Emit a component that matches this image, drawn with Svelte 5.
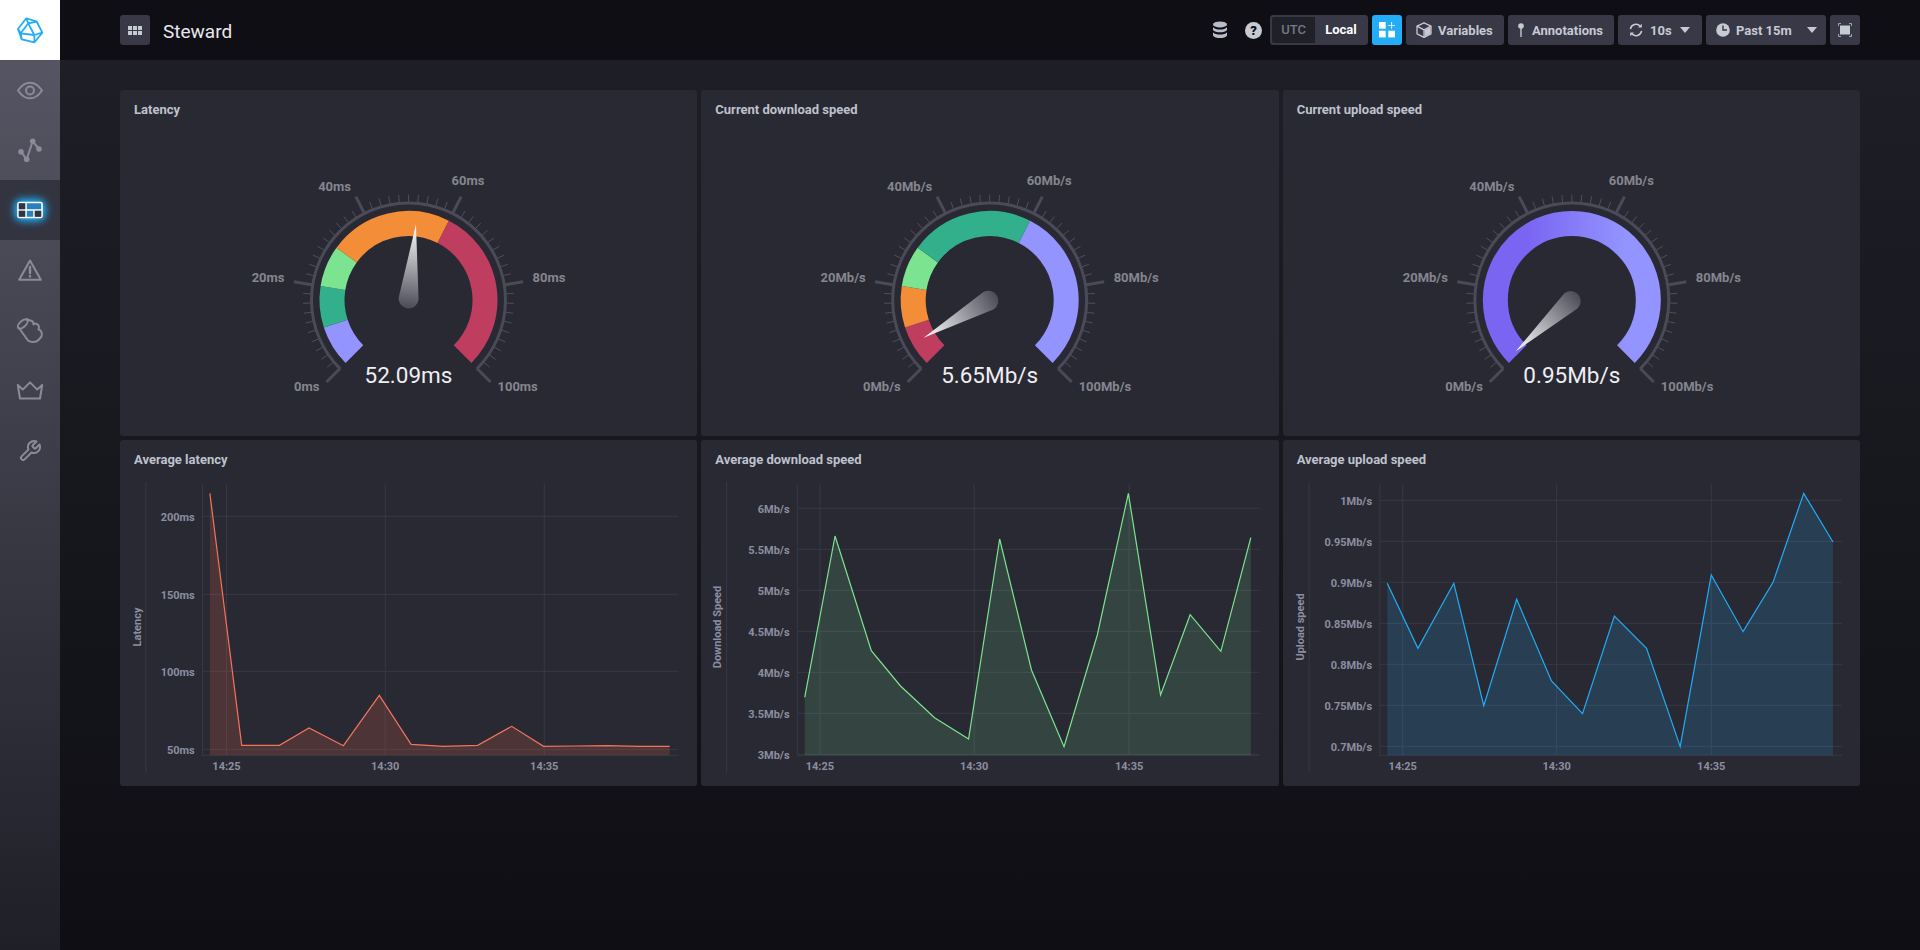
<script>
  const W = 577.33;
  const SX = 1568 / 580;
  const polar = (cx, cy, r, deg) => {
    const a = (deg * Math.PI) / 180;
    return [cx + r * Math.sin(a), cy - r * Math.cos(a)];
  };
  const angle = (pct) => -135 + 2.7 * pct;
  const arc = (cx, cy, r, from, to) => {
    const [x1, y1] = polar(cx, cy, r, angle(from));
    const [x2, y2] = polar(cx, cy, r, angle(to));
    const large = (to - from) * 2.7 > 180 ? 1 : 0;
    return `M${x1.toFixed(2)} ${y1.toFixed(2)}A${r} ${r} 0 ${large} 1 ${x2.toFixed(2)} ${y2.toFixed(2)}`;
  };
  const C = { lav: '#9394ff', teal: '#32b08c', lime: '#7ce490', org: '#f48d38', red: '#bf3d5e' };
  const bounds = [[0, 10], [10, 20], [20, 30], [30, 60], [60, 100]];

  const gauges = [
    { title: 'Latency', left: 120, cx: 408.5, unit: 'ms', pct: 52.09, text: '52.09ms',
      colors: [C.lav, C.teal, C.lime, C.org, C.red] },
    { title: 'Current download speed', left: 701.33, cx: 990, unit: 'Mb/s', pct: 5.65, text: '5.65Mb/s',
      colors: [C.red, C.org, C.lime, C.teal, C.lav] },
    { title: 'Current upload speed', left: 1282.67, cx: 1571.5, unit: 'Mb/s', pct: 0.95, text: '0.95Mb/s',
      colors: null }
  ];
  const labelPos = [
    { v: 0, dx: -89, y: 391.5, anchor: 'end' },
    { v: 20, dx: -124, y: 282.5, anchor: 'end' },
    { v: 40, dx: -57.5, y: 191.5, anchor: 'end' },
    { v: 60, dx: 59.5, y: 185.5, anchor: 'middle' },
    { v: 80, dx: 124, y: 282.5, anchor: 'start' },
    { v: 100, dx: 89, y: 391.5, anchor: 'start' }
  ];
  const ticks = Array.from({ length: 51 }, (_, i) => i);

  const zx = (o, x) => +(o + x / SX).toFixed(2);
  const zy = (y) => +(440 + y / 3).toFixed(2);

  const charts = [
    { title: 'Average latency', left: 120, origin: 120, axis: 70, plotL: 223, plotR: 1510, labelR: 202, yTitle: 'Latency', yTitleX: 45,
      line: '#f4745a', fill: '#f0674f', fillOp: 0.18,
      grid: [[229, '200ms'], [463, '150ms'], [694, '100ms'], [928, '50ms']], vert: [288, 717, 1147],
      pts: [[243,160],[329,916],[431,916],[511,864],[604,917],[701,766],[787,913],[875,919],[967,916],[1059,859],[1145,919],[1230,918],[1317,917],[1402,919],[1486,919]] },
    { title: 'Average download speed', left: 701.33, origin: 700, axis: 73, plotL: 264, plotR: 1513, labelR: 243, yTitle: 'Download Speed', yTitleX: 47,
      line: '#7ce490', fill: '#7ce490', fillOp: 0.15,
      grid: [[205, '6Mb/s'], [328, '5.5Mb/s'], [451, '5Mb/s'], [574, '4.5Mb/s'], [697, '4Mb/s'], [820, '3.5Mb/s'], [943, '3Mb/s']], vert: [325, 742, 1161],
      pts: [[284,772],[366,288],[464,632],[543,738],[635,833],[727,897],[811,297],[897,690],[985,920],[1075,585],[1159,160],[1246,765],[1326,524],[1409,634],[1490,293]] },
    { title: 'Average upload speed', left: 1282.67, origin: 1280, axis: 78, plotL: 269, plotR: 1519, labelR: 248, yTitle: 'Upload speed', yTitleX: 52,
      line: '#22adf6', fill: '#22adf6', fillOp: 0.17,
      grid: [[181, '1Mb/s'], [304, '0.95Mb/s'], [427, '0.9Mb/s'], [550, '0.85Mb/s'], [673, '0.8Mb/s'], [796, '0.75Mb/s'], [919, '0.7Mb/s']], vert: [331, 747, 1165],
      pts: [[289,430],[372,625],[469,430],[550,797],[639,478],[733,723],[817,821],[903,528],[990,625],[1081,920],[1165,405],[1251,575],[1332,427],[1415,160],[1494,306]] }
  ];
  const times = ['14:25', '14:30', '14:35'];
  const BOTTOM = 946;
  const linePts = (c) => c.pts.map(([x, y]) => `${zx(c.origin, x)},${zy(y)}`).join(' ');
  const areaPts = (c) =>
    `${zx(c.origin, c.pts[0][0])},${zy(BOTTOM)} ${linePts(c)} ${zx(c.origin, c.pts[c.pts.length - 1][0])},${zy(BOTTOM)}`;
</script>

<div class="app">
  <nav class="side">
    <div class="logo">
      <svg width="60" height="60" viewBox="0 0 60 60" fill="none" stroke="#22adf6" stroke-width="1.8" stroke-linejoin="round">
        <path d="M26.3 18.3 36.7 21.5 42.3 32.7 34.5 42.3 21.7 39.3 18 29Z" />
        <path d="M26.3 18.3 28.3 23.3 36.7 21.5M28.3 23.3 34.3 35 42.3 32.7M34.3 35 34.5 42.3M28.3 23.3 20.7 33.3 34.3 35M18 29 20.7 33.3 21.7 39.3" />
      </svg>
    </div>
    <div class="item">
      <svg class="ic" width="60" height="60" viewBox="0 0 60 60">
        <path d="M18 30.5C22 24.5 26 22.7 30 22.7S38 24.5 42 30.5C38 36.5 34 38.3 30 38.3S22 36.5 18 30.5Z" />
        <circle cx="30" cy="30.5" r="4" />
      </svg>
    </div>
    <div class="item">
      <svg class="ic" width="60" height="60" viewBox="0 0 60 60">
        <path d="M21 31.7 26.7 39.3 32.7 21.3 39 29" />
        <circle class="dot" cx="21" cy="31.7" r="2.8" />
        <circle class="dot" cx="26.7" cy="39.3" r="2.8" />
        <circle class="dot" cx="32.7" cy="21.3" r="2.8" />
        <circle class="dot" cx="39" cy="29" r="2.8" />
      </svg>
    </div>
    <div class="item active">
      <svg class="glow" width="60" height="60" viewBox="0 0 60 60">
        <rect x="18" y="22.5" width="24" height="15" rx="1.5" fill="#2a7fbd" stroke="#fff" stroke-width="1.6" />
        <path d="M26 22.5V37.5M18 30H42M34 30V37.5" stroke="#fff" stroke-width="1.6" fill="none" />
        <rect x="18.8" y="23.3" width="6.4" height="5.9" fill="#33343f" />
        <rect x="18.8" y="30.8" width="6.4" height="5.9" fill="#33343f" />
        <rect x="34.8" y="30.8" width="6.4" height="5.9" fill="#33343f" />
      </svg>
    </div>
    <div class="item">
      <svg class="ic" width="60" height="60" viewBox="0 0 60 60">
        <path d="M30 20.5 40.8 39.8H19.2Z" />
        <path class="thick" d="M30 27V33M30 36V36.6" />
      </svg>
    </div>
    <div class="item">
      <svg class="ic" width="60" height="60" viewBox="0 0 60 60">
        <path d="M19 28 28 40.5C30.5 42.5 36 42.8 38.5 40L41.5 36.5C42.5 33.5 41.5 30 38.5 29.5 39.8 27 38.5 23.5 35 23.5L33.5 24.5C33.8 22 32 20.5 30 20.5L26.5 19" />
        <ellipse cx="22.7" cy="24" rx="6" ry="3" transform="rotate(-42 22.7 24)" />
      </svg>
    </div>
    <div class="item">
      <svg class="ic" width="60" height="60" viewBox="0 0 60 60">
        <path d="M17.8 25 22.8 29.6 30 22.4 37.2 29.6 42.2 25 40 38.5H20Z" />
      </svg>
    </div>
    <div class="item">
      <svg class="ic" width="60" height="60" viewBox="0 0 60 60">
        <g transform="translate(18 19)">
          <path d="M14.7 6.3a1 1 0 0 0 0 1.4l1.6 1.6a1 1 0 0 0 1.4 0l3.77-3.77a6 6 0 0 1-7.94 7.94l-6.91 6.91a2.12 2.12 0 0 1-3-3l6.91-6.91a6 6 0 0 1 7.94-7.94l-3.76 3.76z" />
        </g>
      </svg>
    </div>
  </nav>

  <div class="main">
    <header class="top">
      <button class="btn square first" aria-label="Dashboards">
        <svg width="14" height="9" viewBox="0 0 14 9" fill="#c6cad3">
          <rect width="4" height="4" /><rect x="5" width="4" height="4" /><rect x="10" width="4" height="4" />
          <rect y="5" width="4" height="4" /><rect x="5" y="5" width="4" height="4" /><rect x="10" y="5" width="4" height="4" />
        </svg>
      </button>
      <h1>Steward</h1>
      <div class="tools">
        <svg class="db" width="16" height="18" viewBox="0 0 16 18" fill="#b8bcc8">
          <ellipse cx="8" cy="3.4" rx="7" ry="3" />
          <path d="M1 6.2C2.5 8 5 8.5 8 8.5S13.5 8 15 6.2V9C14 10.6 11 11.3 8 11.3S2 10.6 1 9Z" />
          <path d="M1 11.2C2.5 13 5 13.6 8 13.6S13.5 13 15 11.2V14.4C14 16.2 11 17 8 17S2 16.2 1 14.4Z" />
        </svg>
        <span class="help">?</span>
        <div class="toggle"><span class="utc">UTC</span><span class="local">Local</span></div>
        <button class="btn square blue" aria-label="Add cell">
          <svg width="16" height="16" viewBox="0 0 16 16" fill="#fff">
            <rect x="0" y="0" width="6.7" height="6.7" /><rect x="0" y="8.7" width="6.7" height="6.7" /><rect x="9.3" y="8.7" width="6.7" height="6.7" />
            <path d="M12.2 0h.9v2.9H16v.9h-2.9v2.9h-.9V3.8H9.3v-.9h2.9z" />
          </svg>
        </button>
        <button class="btn w-var">
          <svg width="16" height="16" viewBox="0 0 16 16" fill="none" stroke="#c6cad3" stroke-width="1.3" stroke-linejoin="round">
            <path d="M8 .8 15 4.2V11.8L8 15.4 1 11.8V4.2Z" />
            <path d="M1 4.2 8 7.8 15 4.2M8 7.8V15.4" />
            <path d="M8.6 8.2 14.5 5V11.5L8.6 14.6Z" fill="#c6cad3" stroke="none" />
          </svg>
          <span>Variables</span>
        </button>
        <button class="btn w-ann">
          <svg width="6" height="14" viewBox="0 0 6 14" fill="#c6cad3">
            <circle cx="3" cy="3" r="2.8" /><rect x="2.3" y="4" width="1.4" height="10" />
          </svg>
          <span>Annotations</span>
        </button>
        <button class="btn w-ref">
          <svg width="14" height="14" viewBox="0 0 14 14" fill="none" stroke="#c6cad3" stroke-width="1.5">
            <path d="M1.4 6.2A5.7 5.7 0 0 1 11.4 3.4M12.6 7.8A5.7 5.7 0 0 1 2.6 10.6" />
            <path d="M12.8.8V4.6H9ZM1.2 13.2V9.4H5Z" fill="#c6cad3" stroke="none" />
          </svg>
          <span class="t10">10s</span>
          <svg class="caret" width="10" height="6" viewBox="0 0 10 6"><path d="M0 0H10L5 6Z" fill="#c6cad3" /></svg>
        </button>
        <button class="btn w-time">
          <svg width="14" height="14" viewBox="0 0 14 14">
            <circle cx="7" cy="7" r="6.8" fill="#c6cad3" />
            <path d="M6.3 2.6H7.7V6.3H11V7.7H6.3Z" fill="#383846" />
          </svg>
          <span class="past">Past 15m</span>
          <svg class="caret" width="10" height="6" viewBox="0 0 10 6"><path d="M0 0H10L5 6Z" fill="#c6cad3" /></svg>
        </button>
        <button class="btn square" aria-label="Full screen">
          <svg width="14" height="14" viewBox="0 0 14 14">
            <rect x="2" y="2.5" width="10" height="9" fill="#c6cad3" />
            <path d="M.4 3V.6H3M11 .6H13.6V3M13.6 11V13.4H11M3 13.4H.4V11" fill="none" stroke="#c6cad3" stroke-width=".8" />
          </svg>
        </button>
      </div>
    </header>

    <section class="grid">
      {#each gauges as g, i}
        <article class="panel">
          <h2>{g.title}</h2>
          <svg class="plot" viewBox="{g.left} 128 {W} 308" width={W} height="308">
            <defs>
              <linearGradient id="needle{i}" gradientUnits="userSpaceOnUse" x1="0" y1="-76" x2="0" y2="10">
                <stop offset="0" stop-color="#ffffff" />
                <stop offset="1" stop-color="#484855" />
              </linearGradient>
              <linearGradient id="sweep{i}" gradientUnits="userSpaceOnUse" x1={g.cx - 89} y1="0" x2={g.cx + 89} y2="0">
                <stop offset="0.25" stop-color="#7a65f2" />
                <stop offset="0.8" stop-color="#9394ff" />
              </linearGradient>
            </defs>
            {#each ticks as t}
              {@const major = t % 10 === 0}
              {@const a = polar(g.cx, 300, 96.5, angle(t * 2))}
              {@const b = polar(g.cx, 300, major ? 116 : 105.5, angle(t * 2))}
              <line x1={a[0]} y1={a[1]} x2={b[0]} y2={b[1]} stroke={major ? '#4a4a58' : '#4f4f5c'} stroke-width={major ? 3 : 1} />
            {/each}
            <path d={arc(g.cx, 300, 97, 0, 100)} fill="none" stroke="#4a4a58" stroke-width="3" />
            {#if g.colors}
              {#each bounds as s, k}
                <path d={arc(g.cx, 300, 76.5, s[0], s[1])} fill="none" stroke={g.colors[k]} stroke-width="25" />
              {/each}
            {:else}
              <path d={arc(g.cx, 300, 76.5, 0, 100)} fill="none" stroke="url(#sweep{i})" stroke-width="25" />
            {/if}
            {#each labelPos as l}
              <text class="gl" x={g.cx + l.dx} y={l.y} text-anchor={l.anchor}>{l.v}{g.unit}</text>
            {/each}
            <g transform="translate({g.cx} 300) rotate({angle(g.pct)})">
              <path d="M0 -76 10 -1.5A10 10 0 1 1 -10 -1.5Z" fill="url(#needle{i})" />
            </g>
            <text class="gv" x={g.cx} y="383" text-anchor="middle">{g.text}</text>
          </svg>
        </article>
      {/each}

      {#each charts as c}
        <article class="panel">
          <h2>{c.title}</h2>
          <svg class="plot" viewBox="{c.left} 478 {W} 308" width={W} height="308">
            <line class="axis" x1={zx(c.origin, c.axis)} y1="481.7" x2={zx(c.origin, c.axis)} y2="772.7" />
            <line class="gridl" x1={zx(c.origin, c.plotL)} y1="484" x2={zx(c.origin, c.plotL)} y2={zy(BOTTOM)} />
            {#each c.vert as v}
              <line class="gridl" x1={zx(c.origin, v)} y1="484" x2={zx(c.origin, v)} y2={zy(BOTTOM)} />
            {/each}
            {#each c.grid as g}
              <line class="gridl" x1={zx(c.origin, c.plotL)} y1={zy(g[0])} x2={zx(c.origin, c.plotR)} y2={zy(g[0])} />
              <text class="tick" x={zx(c.origin, c.labelR)} y={zy(g[0]) + 4.5} text-anchor="end">{g[1]}</text>
            {/each}
            <line class="gridl" x1={zx(c.origin, c.plotL)} y1={zy(BOTTOM)} x2={zx(c.origin, c.plotR)} y2={zy(BOTTOM)} />
            <polygon points={areaPts(c)} fill={c.fill} fill-opacity={c.fillOp} />
            <polyline points={linePts(c)} fill="none" stroke={c.line} stroke-width="1.2" />
            {#each c.vert as v, k}
              <text class="tick" x={zx(c.origin, v)} y="770" text-anchor="middle">{times[k]}</text>
            {/each}
            <text class="tick ytitle" text-anchor="middle"
              transform="translate({zx(c.origin, c.yTitleX) + 4} 627) rotate(-90)">{c.yTitle}</text>
          </svg>
        </article>
      {/each}
    </section>
  </div>
</div>

<style>
  :global(body) {
    margin: 0;
    background: #0f0e15;
    font-family: Roboto, "Liberation Sans", sans-serif;
  }
  .app {
    display: flex;
    height: 950px;
    overflow: hidden;
  }
  .side {
    width: 60px;
    flex: none;
    display: flex;
    flex-direction: column;
    background: linear-gradient(180deg, #ffffff 0, #ffffff 60px, #555563 60px, #1f1f28 100%);
  }
  .logo,
  .item {
    height: 60px;
    flex: none;
  }
  .logo svg,
  .item svg {
    display: block;
  }
  .item.active {
    background: #33343f;
  }
  .glow {
    filter: drop-shadow(0 0 5px #22adf6) drop-shadow(0 0 3px #22adf6);
  }
  .ic path,
  .ic circle,
  .ic ellipse {
    fill: none;
    stroke: #8a8a98;
    stroke-width: 2;
    stroke-linejoin: round;
    stroke-linecap: round;
  }
  .ic circle.dot {
    fill: #8a8a98;
    stroke: none;
  }
  .ic path.thick {
    stroke-width: 2.4;
  }
  .main {
    flex: 1;
    min-width: 0;
    display: flex;
    flex-direction: column;
    background: linear-gradient(180deg, #1e1f26 60px, #0f0e15 100%);
  }
  .top {
    height: 60px;
    flex: none;
    box-sizing: border-box;
    display: flex;
    align-items: center;
    padding: 0 60px;
    background: #0f0e15;
  }
  h1 {
    margin: 2px 0 0 13px;
    font: 400 19px Roboto, sans-serif;
    color: #e7e8eb;
  }
  .tools {
    margin-left: auto;
    display: flex;
    align-items: center;
    gap: 4px;
  }
  .db {
    margin-right: 13px;
  }
  .help {
    width: 17px;
    height: 17px;
    border-radius: 50%;
    background: #c6cad3;
    color: #0f0e15;
    font: 900 13px/17px Roboto, sans-serif;
    text-align: center;
    margin-right: 4px;
  }
  .btn {
    height: 30px;
    box-sizing: border-box;
    border: 0;
    border-radius: 3px;
    background: #383846;
    color: #c6cad3;
    font: 700 13px Roboto, sans-serif;
    display: flex;
    align-items: center;
    padding: 0;
  }
  .square {
    width: 30px;
    justify-content: center;
  }
  .first {
    flex: none;
  }
  .blue {
    background: #22adf6;
  }
  .toggle {
    width: 98px;
    height: 30px;
    box-sizing: border-box;
    padding: 2px;
    background: #383846;
    border-radius: 3px;
    display: flex;
    font: 700 13px/26px Roboto, sans-serif;
    text-align: center;
  }
  .utc {
    width: 43px;
    background: #202028;
    border-radius: 2px 0 0 2px;
    color: #757888;
    font-weight: 500;
  }
  .local {
    flex: 1;
    color: #fff;
    padding-left: 1px;
  }
  .w-var {
    width: 98px;
    padding-left: 10px;
    gap: 6px;
  }
  .w-ann {
    width: 106px;
    padding-left: 10px;
    gap: 8px;
  }
  .w-ref {
    width: 84px;
    padding-left: 11px;
  }
  .t10 {
    margin-left: 7px;
  }
  .w-ref .caret {
    margin-left: 8px;
  }
  .w-time {
    width: 120px;
    padding-left: 10px;
  }
  .past {
    margin-left: 6px;
  }
  .w-time .caret {
    margin-left: 15px;
  }
  .grid {
    display: grid;
    grid-template-columns: repeat(3, 1fr);
    grid-auto-rows: 346px;
    gap: 4px;
    padding: 30px 60px 0;
  }
  .panel {
    background: #292933;
    border-radius: 3px;
    display: flex;
    flex-direction: column;
    min-width: 0;
  }
  h2 {
    height: 38px;
    box-sizing: border-box;
    margin: 0;
    padding: 12px 14px 0;
    font: 700 13px/16px Roboto, sans-serif;
    color: #bec2cc;
  }
  .plot {
    display: block;
    width: 100%;
    height: 308px;
  }
  .gl {
    font: 700 13px Roboto, sans-serif;
    fill: #85868f;
  }
  .gv {
    font: 400 22.5px Roboto, sans-serif;
    fill: #eeeff2;
  }
  .tick {
    font: 700 11px Roboto, sans-serif;
    fill: #8b8ea0;
  }
  .ytitle {
    fill: #8b8ea0;
  }
  .axis {
    stroke: #383846;
    stroke-width: 1;
  }
  .gridl {
    stroke: #383846;
    stroke-width: 1;
  }
</style>
